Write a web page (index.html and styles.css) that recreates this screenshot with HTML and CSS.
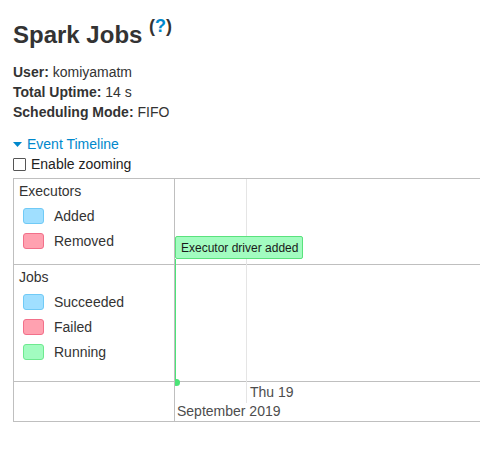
FILE: index.html
```html
<!DOCTYPE html>
<html>
<head>
<meta charset="utf-8">
<link rel="stylesheet" href="styles.css">
</head>
<body>
<h3 class="title">Spark Jobs <sup class="help">(<a href="#">?</a>)</sup></h3>
<ul class="summary">
  <li><strong>User:</strong> komiyamatm</li>
  <li><strong>Total Uptime:</strong> 14 s</li>
  <li><strong>Scheduling Mode:</strong> FIFO</li>
</ul>
<div class="toggle">
  <svg class="caret" width="9" height="5" viewBox="0 0 9 5"><path d="M0 0H9L4.5 5Z" fill="#0088cc"/></svg>
  <a href="#">Event Timeline</a>
</div>
<label class="zoom"><input type="checkbox" class="check">Enable zooming</label>
<div class="timeline">
  <div class="legend row-exec">
    <div class="legend-title">Executors</div>
    <div class="legend-item"><span class="swatch blue"></span>Added</div>
    <div class="legend-item"><span class="swatch red"></span>Removed</div>
  </div>
  <div class="cell row-exec"></div>
  <div class="legend row-jobs">
    <div class="legend-title">Jobs</div>
    <div class="legend-item"><span class="swatch blue"></span>Succeeded</div>
    <div class="legend-item"><span class="swatch red"></span>Failed</div>
    <div class="legend-item"><span class="swatch green"></span>Running</div>
  </div>
  <div class="cell row-jobs"></div>
  <div class="legend row-axis"></div>
  <div class="cell row-axis"></div>
  <div class="canvas">
    <div class="gridline"></div>
    <div class="item">Executor driver added</div>
    <div class="marker-line"></div>
    <div class="marker-dot"></div>
    <div class="axis-minor">Thu 19</div>
    <div class="axis-major">September 2019</div>
  </div>
</div>
</body>
</html>
```
FILE: styles.css
```css
html, body {
  overflow: hidden;
}
body {
  margin: 0;
  padding: 0 13px;
  font-family: "Liberation Sans", Arial, sans-serif;
  font-size: 14px;
  line-height: 20px;
  color: #333;
  background: #fff;
}
a {
  color: #0088cc;
  text-decoration: none;
}
.title {
  margin: 22px 0 14px;
  font-size: 24px;
  line-height: 26px;
  font-weight: bold;
}
.help {
  font-size: 18px;
  line-height: 0;
  vertical-align: 11px;
}
.summary {
  list-style: none;
  margin: 0;
  padding: 0;
}
.toggle {
  margin-top: 12px;
  display: flex;
  align-items: center;
}
.caret {
  margin-right: 5px;
}
.zoom {
  display: flex;
  align-items: center;
  color: #222;
}
.check {
  appearance: none;
  -webkit-appearance: none;
  width: 13px;
  height: 13px;
  margin: 0 5px 0 0;
  border: 1px solid #555;
  border-radius: 1px;
  background: #fff;
  box-sizing: border-box;
}
.timeline {
  position: relative;
  margin: 4px -13px 0 0;
  display: grid;
  grid-template-columns: 161px 1fr;
  grid-template-rows: 86px 117px 39px;
  border: 1px solid #bfbfbf;
  border-right: none;
}
.legend {
  border-right: 1px solid #bfbfbf;
  padding: 2px 0 0 5px;
  box-sizing: border-box;
}
.row-exec, .row-jobs {
  border-bottom: 1px solid #bfbfbf;
}
.legend-title {
  margin-bottom: 2px;
}
.legend-item {
  display: flex;
  align-items: center;
  height: 25px;
}
.swatch {
  width: 21px;
  height: 16px;
  box-sizing: border-box;
  border-radius: 3px;
  border: 1px solid;
  margin: 0 10px 0 4px;
}
.swatch.blue {
  background: #a0dfff;
  border-color: #70caf6;
}
.swatch.red {
  background: #ffa1b0;
  border-color: #f2708a;
}
.swatch.green {
  background: #a2fcc0;
  border-color: #6ee98f;
}
.canvas {
  position: absolute;
  left: 161px;
  top: 0;
  right: 0;
  bottom: 0;
  overflow: hidden;
  pointer-events: none;
}
.gridline {
  position: absolute;
  left: 71px;
  top: 0;
  width: 1px;
  height: 224px;
  background: #e5e5e5;
}
.item {
  position: absolute;
  left: 0;
  top: 57px;
  width: 128px;
  height: 23px;
  box-sizing: border-box;
  padding: 2px 0 0 5px;
  font-size: 12px;
  line-height: 19px;
  color: #1a1a1a;
  background: #a2fcc0;
  border: 1px solid #5ae27d;
  border-radius: 2px;
  white-space: nowrap;
}
.marker-line {
  position: absolute;
  left: 0;
  top: 80px;
  width: 1px;
  height: 122px;
  background: #4be477;
}
.marker-dot {
  position: absolute;
  left: -2px;
  top: 200px;
  width: 7px;
  height: 7px;
  border-radius: 50%;
  background: #4be477;
}
.axis-minor {
  position: absolute;
  left: 75px;
  top: 203px;
  color: #4d4d4d;
}
.axis-major {
  position: absolute;
  left: 2px;
  top: 222px;
  color: #4d4d4d;
  white-space: nowrap;
}
```
